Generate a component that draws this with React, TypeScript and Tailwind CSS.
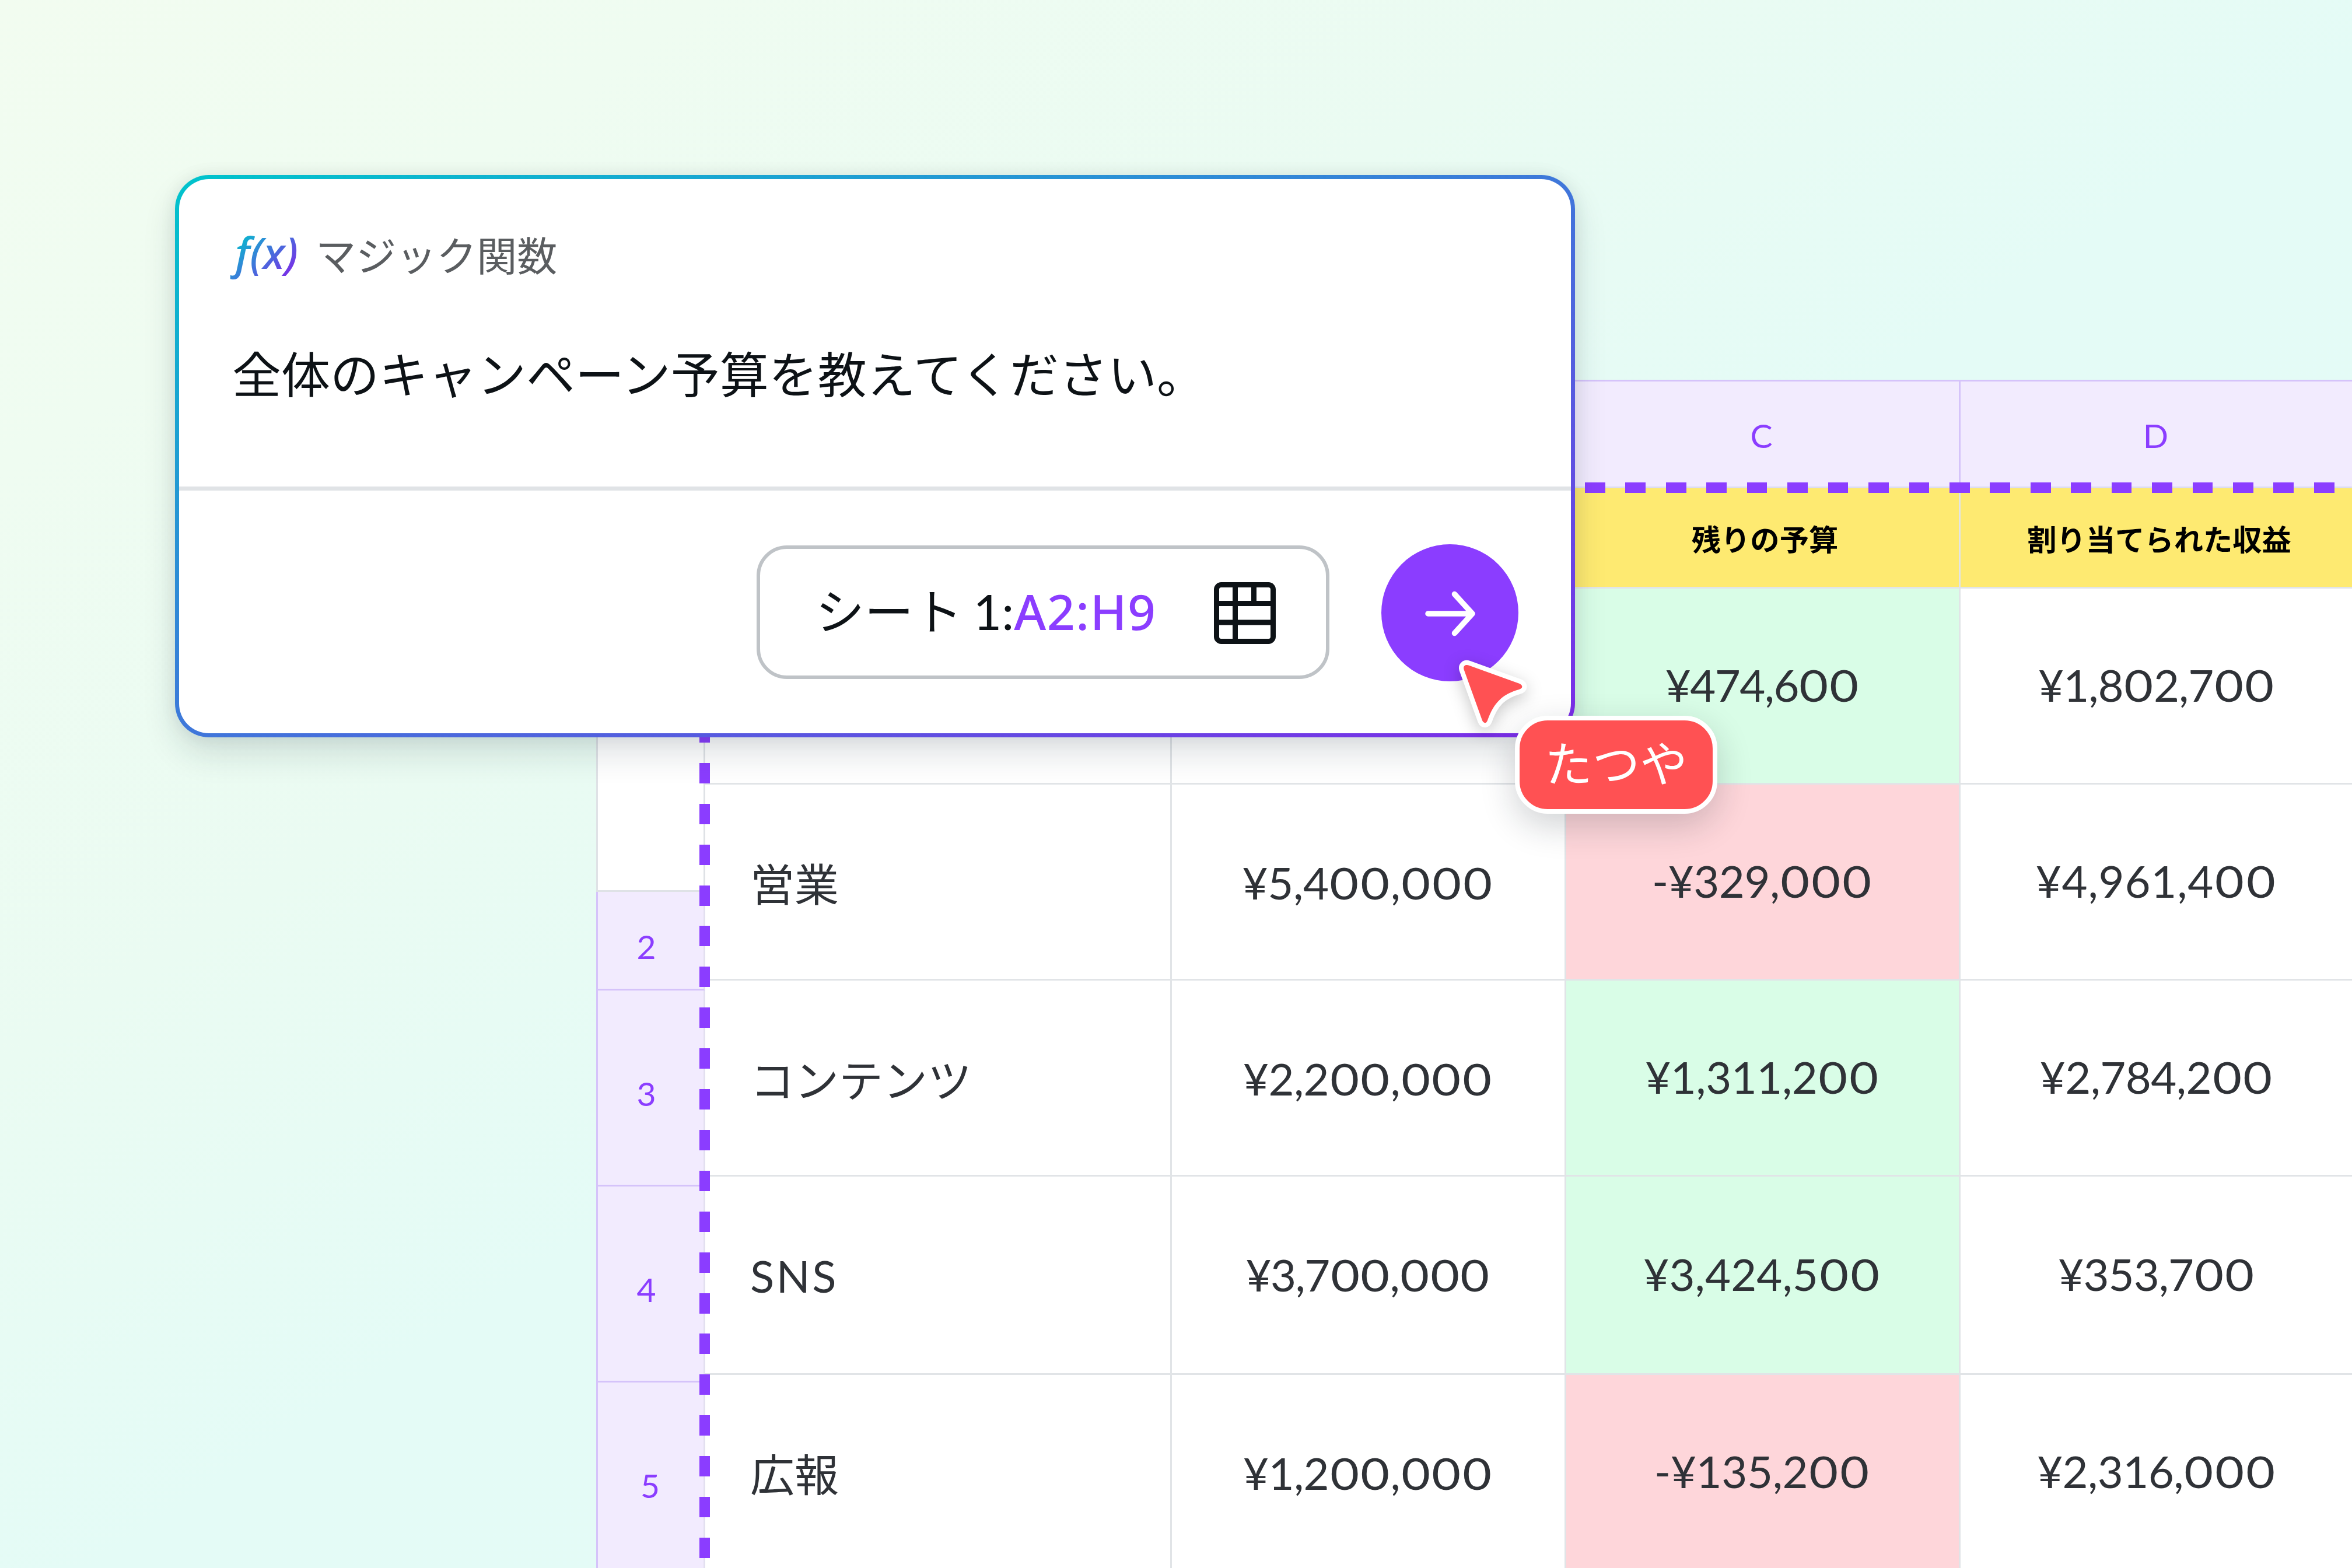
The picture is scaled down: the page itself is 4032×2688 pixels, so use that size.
import clsx from "clsx";

type Row = {
  name: string;
  jp: boolean;
  height: string;
  shift: string;
  budget: string;
  budgetTracking: string;
  left: string;
  leftTracking: string;
  over: boolean;
  revenue: string;
  revenueTracking: string;
};

const rows: Row[] = [
  {
    name: "",
    jp: true,
    height: "h-[336px]",
    shift: "",
    budget: "",
    budgetTracking: "",
    left: "¥474,600",
    leftTracking: "tracking-[-1.6px]",
    over: false,
    revenue: "¥1,802,700",
    revenueTracking: "tracking-[-1px]",
  },
  {
    name: "営業",
    jp: true,
    height: "h-[336px]",
    shift: "pt-[6px]",
    budget: "¥5,400,000",
    budgetTracking: "tracking-[-0.3px]",
    left: "-¥329,000",
    leftTracking: "tracking-[-0.5px]",
    over: true,
    revenue: "¥4,961,400",
    revenueTracking: "tracking-[0.8px]",
  },
  {
    name: "コンテンツ",
    jp: true,
    height: "h-[336px]",
    shift: "pt-[6px]",
    budget: "¥2,200,000",
    budgetTracking: "tracking-[-0.6px]",
    left: "¥1,311,200",
    leftTracking: "tracking-[-0.5px]",
    over: false,
    revenue: "¥2,784,200",
    revenueTracking: "tracking-[-0.6px]",
  },
  {
    name: "SNS",
    jp: false,
    height: "h-[340px]",
    shift: "pt-[2px]",
    budget: "¥3,700,000",
    budgetTracking: "tracking-[-1.5px]",
    left: "¥3,424,500",
    leftTracking: "tracking-[0.1px]",
    over: false,
    revenue: "¥353,700",
    revenueTracking: "tracking-[-1px]",
  },
  {
    name: "広報",
    jp: true,
    height: "h-[336px]",
    shift: "pt-[6px]",
    budget: "¥1,200,000",
    budgetTracking: "tracking-[-0.6px]",
    left: "-¥135,200",
    leftTracking: "tracking-[-0.4px]",
    over: true,
    revenue: "¥2,316,000",
    revenueTracking: "tracking-[-0.6px]",
  },
];

const rowNumbers = [
  { n: "2", height: "h-[169px]", pad: "pr-[15px]" },
  { n: "3", height: "h-[336px]", pad: "pr-[15px]" },
  { n: "4", height: "h-[336px]", pad: "pr-[15px]" },
  { n: "5", height: "h-[336px]", pad: "pr-[2px]" },
];

const cell =
  "flex h-full shrink-0 items-center border-r-[3px] border-b-[3px] border-[#e1e4e7] leading-none whitespace-nowrap";

// amounts use round, wide zeros
const Amount = ({ value }: { value: string }) => (
  <span className="-mt-[4px] pr-[2px]">
    {value.split("").map((c, i) =>
      c === "0" ? (
        <span key={i} className="mx-[4.6px] inline-block scale-x-[1.13]">
          0
        </span>
      ) : (
        c
      ),
    )}
  </span>
);

const RowNumbers = () => (
  <div className="w-[187px] shrink-0">
    <div className="h-[878px] border-x-[3px] border-b-[3px] border-[#dfe2e6] bg-white" />
    {rowNumbers.map((r) => (
      <div
        key={r.n}
        className={clsx(
          "flex items-center justify-center border-x-[3px] border-b-[3px] border-[#d5c3fa] border-r-[#e3e0f0] bg-[#f2ebfe] pt-[20px] font-['Lato',sans-serif] text-[57px] leading-none text-[#8b3dff]",
          r.height,
          r.pad,
        )}
      >
        {r.n}
      </div>
    ))}
  </div>
);

const ColumnHead = ({ label, width }: { label: string; width: string }) => (
  <div
    className={clsx(
      "flex h-full shrink-0 items-center justify-center border-y-[3px] border-r-[3px] border-[#d5c3fa] border-b-[#dcdcf0] bg-[#f2ebfe] pt-[5px] pr-1 font-['Lato',sans-serif] text-[57px] leading-none text-[#8b3dff]",
      width,
    )}
  >
    {label}
  </div>
);

const TitleCell = ({ label, width }: { label: string; width: string }) => (
  <div
    className={clsx(
      cell,
      width,
      "justify-center bg-[#feea71] pt-[2px] pl-[8px] font-['Noto_Sans_CJK_JP',sans-serif] text-[50.3px] font-bold text-black",
    )}
  >
    {label}
  </div>
);

const Sheet = () => (
  <div className="flex pt-[651px] pl-[1022px]">
    <RowNumbers />
    <div className="shrink-0">
      <div className="flex h-[186px]">
        <ColumnHead label="" width="w-[800px]" />
        <ColumnHead label="" width="w-[676px]" />
        <ColumnHead label="C" width="w-[676px]" />
        <ColumnHead label="D" width="w-[676px]" />
      </div>
      <div className="flex h-[172px]">
        <TitleCell label="" width="w-[800px]" />
        <TitleCell label="" width="w-[676px]" />
        <TitleCell label="残りの予算" width="w-[676px]" />
        <TitleCell label="割り当てられた収益" width="w-[676px]" />
      </div>
      {rows.map((r, i) => (
        <div
          key={i}
          className={clsx("flex font-['Lato',sans-serif] text-[76px] text-[#2f3237]", r.height)}
        >
          <div
            className={clsx(
              cell,
              "w-[800px] bg-white pl-[77px]",
              r.jp ? "font-['Noto_Sans_CJK_JP',sans-serif]" : "pt-[3px] tracking-[3.5px]",
            )}
          >
            {r.name}
          </div>
          <div className={clsx(cell, "w-[676px] justify-center bg-white", r.shift, r.budgetTracking)}>
            <Amount value={r.budget} />
          </div>
          <div
            className={clsx(
              cell,
              "w-[676px] justify-center",
              r.over ? "bg-[#fed6da]" : "bg-[#d9fde7]",
              r.leftTracking,
            )}
          >
            <Amount value={r.left} />
          </div>
          <div className={clsx(cell, "w-[676px] justify-center bg-white", r.revenueTracking)}>
            <Amount value={r.revenue} />
          </div>
        </div>
      ))}
    </div>
  </div>
);

const TableIcon = () => (
  <svg
    viewBox="0 0 106 106"
    className="mt-[3px] h-[106px] w-[106px]"
    fill="none"
    stroke="#0d1216"
    strokeWidth="9"
  >
    <rect x="4.5" y="4.5" width="97" height="97" rx="8" />
    <path d="M4.5 36.5h97M4.5 69h97M36.5 4.5v97M68.5 4.5v32" />
  </svg>
);

const ArrowIcon = () => (
  <svg
    viewBox="0 0 86 86"
    className="mt-[3px] h-[86px] w-[86px]"
    fill="none"
    stroke="white"
    strokeWidth="9.5"
    strokeLinecap="round"
    strokeLinejoin="round"
  >
    <path d="M5 43h76M50.500 9.500 81 43 50.500 76.500" />
  </svg>
);

const FormulaCard = () => (
  <div className="absolute top-[300px] left-[300px] h-[964px] w-[2400px] rounded-[58px] bg-[linear-gradient(to_bottom_right,#00c4cc,#7d2ae8)] p-[7px] shadow-[0_28px_56px_rgba(20,40,55,0.14),0_0_28px_rgba(20,40,55,0.08)]">
    <div className="flex h-full flex-col rounded-[51px] bg-white">
      <div className="flex h-[534px] shrink-0 flex-col border-b-[7px] border-[#e0e3e6] pt-[86px] pl-[91px]">
        <div className="flex h-[84px] items-center">
          <span className="-mt-[7px] -ml-[5px] bg-[linear-gradient(135deg,#00c4cc_15%,#7d2ae8_85%)] bg-clip-text px-[10px] font-['Noto_Sans',sans-serif] text-[75px] leading-[110px] font-medium text-transparent italic">
            f(x)
          </span>
          <span className="ml-[20px] font-['Noto_Sans_CJK_JP',sans-serif] text-[69px] leading-none text-[#5a5d60]">
            マジック関数
          </span>
        </div>
        <div className="mt-[119px] font-['Noto_Sans_CJK_JP',sans-serif] text-[84px] leading-none whitespace-nowrap text-[#0d1216]">
          全体のキャンペーン予算を教えてください。
        </div>
      </div>
      <div className="flex grow items-center justify-end gap-[89px] pr-[90px]">
        <div className="flex h-[229px] w-[982px] items-center justify-between rounded-[52px] border-[6px] border-[#bfc3c7] pr-[86px] pl-[95px]">
          <div className="-mt-[6px] flex items-baseline text-[84px] leading-none whitespace-pre text-[#0d1216]">
            <span className="font-['Noto_Sans_CJK_JP',sans-serif]">シート</span>
            <span className="-ml-[3px] font-['Lato',sans-serif]"> 1:</span>
            <span className="font-['Noto_Sans',sans-serif] font-medium tracking-[1.5px] text-[#8b3dff]">
              A2:H9
            </span>
          </div>
          <TableIcon />
        </div>
        <div className="mt-[2px] flex h-[235px] w-[235px] items-center justify-center rounded-full bg-[#8b3dff]">
          <ArrowIcon />
        </div>
      </div>
    </div>
  </div>
);

const Cursor = () => (
  <>
    <svg
      viewBox="0 0 140 140"
      className="absolute top-[1120px] left-[2490px] h-[140px] w-[140px] overflow-visible drop-shadow-[0_8px_14px_rgba(0,0,0,0.22)]"
    >
      <path
        d="M20 29C17 22 22 18 29 21L115 52C121 55 121 60 114 62C86 70 71 84 60 115C58 121 53 120 51 115Z"
        fill="#ff5153"
        stroke="white"
        strokeWidth="16"
        strokeLinejoin="round"
        paintOrder="stroke"
      />
    </svg>
    <div className="absolute top-[1227px] left-[2597px] flex h-[168px] w-[347px] items-center justify-center rounded-[56px] border-[8px] border-white bg-[#ff5153] pb-[13px] font-['Noto_Sans_CJK_JP',sans-serif] text-[81.500px] leading-none text-white shadow-[0_20px_60px_rgba(20,30,40,0.2)]">
      たつや
    </div>
  </>
);

export default function App() {
  return (
    <div className="relative h-[2688px] w-[4032px] overflow-hidden bg-[linear-gradient(to_bottom_right,#f2fcf0_0%,#effcf1_15%,#eafbf2_34%,#e4fbf6_52%,#e4fbf7_100%)]">
      <Sheet />
      {/* marching selection range */}
      <div className="absolute top-[827px] left-[2717px] h-[18px] w-[1315px] bg-[repeating-linear-gradient(to_right,#8b3dff_0,#8b3dff_34.7px,transparent_34.7px,transparent_69.44px)]" />
      <div className="absolute top-[1238px] left-[1199px] h-[1450px] w-[18px] bg-[repeating-linear-gradient(to_bottom,#8b3dff_0,#8b3dff_35px,transparent_35px,transparent_69.9px)]" />
      <FormulaCard />
      <Cursor />
    </div>
  );
}
